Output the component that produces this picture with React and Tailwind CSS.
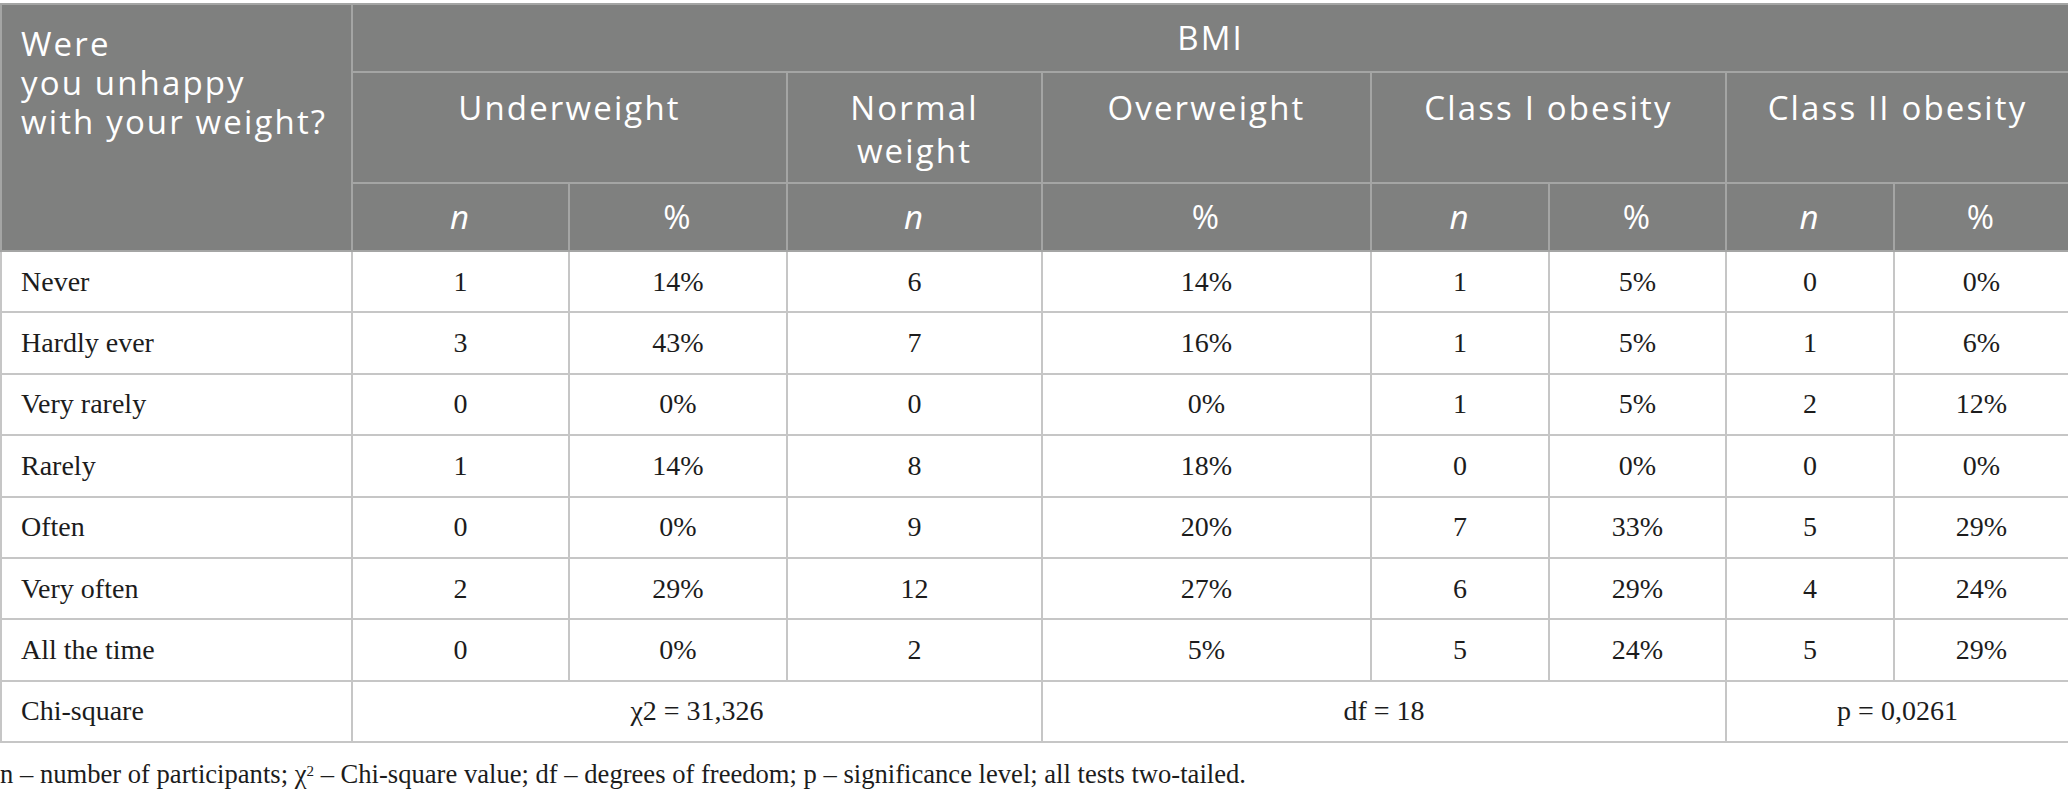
import React from "react";

const rows = [
  ["Never", "1", "14%", "6", "14%", "1", "5%", "0", "0%"],
  ["Hardly ever", "3", "43%", "7", "16%", "1", "5%", "1", "6%"],
  ["Very rarely", "0", "0%", "0", "0%", "1", "5%", "2", "12%"],
  ["Rarely", "1", "14%", "8", "18%", "0", "0%", "0", "0%"],
  ["Often", "0", "0%", "9", "20%", "7", "33%", "5", "29%"],
  ["Very often", "2", "29%", "12", "27%", "6", "29%", "4", "24%"],
  ["All the time", "0", "0%", "2", "5%", "5", "24%", "5", "29%"],
];

const th =
  "border-2 border-[#a4a5a4] bg-[#7f807f] text-white font-normal font-['Open_Sans',sans-serif] text-[33px] tracking-[0.065em]";
const td =
  "border-2 border-[#c6c6c6] text-[#1c1c1c] font-['Liberation_Serif',serif] text-[28px] h-[61.4px] text-center";

export default function App() {
  return (
    <div className="w-[2068px] bg-white pt-[3px]">
      <table className="w-[2068px] table-fixed border-collapse">
        <colgroup>
          <col className="w-[351px]" />
          <col className="w-[217px]" />
          <col className="w-[218px]" />
          <col className="w-[255px]" />
          <col className="w-[329px]" />
          <col className="w-[178px]" />
          <col className="w-[177px]" />
          <col className="w-[168px]" />
          <col className="w-[175px]" />
        </colgroup>
        <thead>
          <tr className="h-[68px]">
            <th
              rowSpan={3}
              className={`${th} align-top text-left pl-[19px] pt-[19px] leading-[39px]`}
            >
              <div>Were</div>
              <div>you unhappy</div>
              <div>with your weight?</div>
            </th>
            <th colSpan={8} className={`${th} text-center align-middle leading-[40px]`}>
              BMI
            </th>
          </tr>
          <tr className="h-[111px]">
            <th colSpan={2} className={`${th} align-top text-center pt-[13px] leading-[43px]`}>
              Underweight
            </th>
            <th className={`${th} align-top text-center pt-[13px] leading-[43px]`}>
              <div>Normal</div>
              <div>weight</div>
            </th>
            <th className={`${th} align-top text-center pt-[13px] leading-[43px]`}>
              Overweight
            </th>
            <th colSpan={2} className={`${th} align-top text-center pt-[13px] leading-[43px]`}>
              Class I obesity
            </th>
            <th colSpan={2} className={`${th} align-top text-center pt-[13px] leading-[43px]`}>
              Class II obesity
            </th>
          </tr>
          <tr className="h-[68px]">
            {["n", "%", "n", "%", "n", "%", "n", "%"].map((h, i) => (
              <th key={i} className={`${th} text-center align-middle`}>
                {h === "n" ? <span className="italic">n</span> : h}
              </th>
            ))}
          </tr>
        </thead>
        <tbody>
          {rows.map((r) => (
            <tr key={r[0]}>
              {r.map((c, i) => (
                <td key={i} className={`${td} ${i === 0 ? "!text-left pl-[19px]" : ""}`}>
                  {c}
                </td>
              ))}
            </tr>
          ))}
          <tr>
            <td className={`${td} !text-left pl-[19px]`}>Chi-square</td>
            <td colSpan={3} className={td}>
              χ2 = 31,326
            </td>
            <td colSpan={3} className={td}>
              df = 18
            </td>
            <td colSpan={2} className={td}>
              p = 0,0261
            </td>
          </tr>
        </tbody>
      </table>
      <p className="mt-[16px] text-[26.6px] leading-[30px] text-[#1c1c1c] font-['Liberation_Serif',serif]">
        n – number of participants; χ<sup className="text-[15px]">2</sup> – Chi-square value; df –
        degrees of freedom; p – significance level; all tests two-tailed.
      </p>
    </div>
  );
}
